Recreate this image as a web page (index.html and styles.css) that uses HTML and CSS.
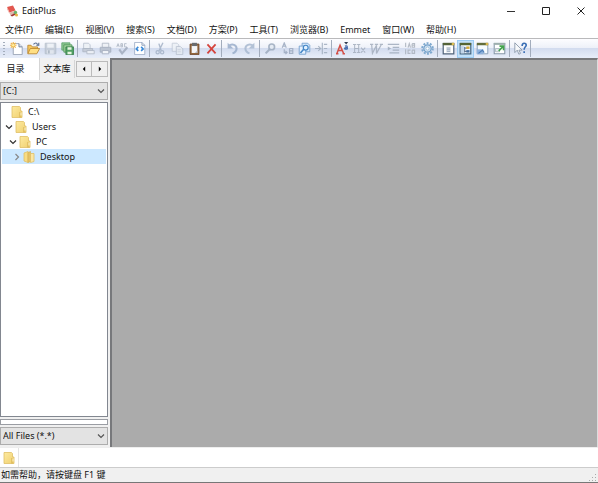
FILE: index.html
```html
<!DOCTYPE html>
<html lang="zh-CN">
<head>
<meta charset="utf-8">
<title>EditPlus</title>
<link rel="stylesheet" href="styles.css">
</head>
<body>
<svg class="defs" aria-hidden="true">
  <defs>
    <linearGradient id="gold" x1="0" y1="0" x2="1" y2="1"><stop offset="0" stop-color="#fdeaa0"/><stop offset="1" stop-color="#f0d070"/></linearGradient>
    <symbol id="folder" viewBox="0 0 12 12">
      <path d="M1 .5h7.500l1 1V5h1.500v6.500H1z" fill="url(#gold)" stroke="#e0bf66" stroke-width=".8"/>
      <path d="M9 6v5.500" stroke="#d3ad4d" stroke-width="1"/>
      <path d="M10 6.500v3" stroke="#fff6cf" stroke-width="1"/>
    </symbol>
    <symbol id="folder-open" viewBox="0 0 12 12">
      <path d="M1 2l4-1.500v11l-4-1.500z" fill="#f8dc83" stroke="#e0bf66" stroke-width=".8"/>
      <path d="M5 1.500L7.500 .5v10l-2.500 1z" fill="#e5c367" stroke="#d3ad4d" stroke-width=".6"/>
      <path d="M7.500 2.500h3.500v8l-3.500 1z" fill="#fbe7a4" stroke="#e0bf66" stroke-width=".8"/>
    </symbol>
    <symbol id="down" viewBox="0 0 10 10"><path d="M2 3.500l3 3 3-3" fill="none" stroke="currentColor" stroke-width="1.200"/></symbol>
    <symbol id="right" viewBox="0 0 10 10"><path d="M3.500 2l3 3-3 3" fill="none" stroke="currentColor" stroke-width="1.200"/></symbol>
  </defs>
</svg>
<div class="app">
  <header class="titlebar">
    <svg class="logo" viewBox="0 0 12 12" aria-hidden="true">
      <path d="M1 2l6-1.500 2.500 5-6 2z" fill="#e2574f"/><path d="M1 2l2.500 5.500V9L1 4z" fill="#f5aaa0"/>
      <path d="M3.500 7.500l6-2 1 2-6 3z" fill="#dfb9ad"/><path d="M4.500 10.500l5-3 .5 2-4 2z" fill="#a33835"/>
      <circle cx="9.500" cy="7.500" r="1.700" fill="#69b36c"/><circle cx="10.500" cy="10" r="1.500" fill="#e8b343"/>
    </svg>
    <h1>EditPlus</h1>
    <div class="window-buttons">
      <button type="button" aria-label="最小化"><svg viewBox="0 0 10 10"><path d="M1 5.500h8" stroke="#333"/></svg></button>
      <button type="button" aria-label="最大化"><svg viewBox="0 0 10 10"><path d="M1.500 1.500h7v7h-7z" fill="none" stroke="#222"/></svg></button>
      <button type="button" aria-label="关闭"><svg viewBox="0 0 10 10"><path d="M1.500 1.500l7 7m0-7l-7 7" stroke="#222"/></svg></button>
    </div>
  </header>
  <nav class="menubar">
    <button type="button">文件(F)</button>
    <button type="button">编辑(E)</button>
    <button type="button">视图(V)</button>
    <button type="button">搜索(S)</button>
    <button type="button">文档(D)</button>
    <button type="button">方案(P)</button>
    <button type="button">工具(T)</button>
    <button type="button">浏览器(B)</button>
    <button type="button">Emmet</button>
    <button type="button">窗口(W)</button>
    <button type="button">帮助(H)</button>
  </nav>
  <div class="toolbar" role="toolbar">
    <span class="grip"></span>
    <button type="button" aria-label="新建"><svg viewBox="0 0 16 16"><path d="M4 2h7l4 4v9.500H4z" fill="#fff" stroke="#8c98ab"/><path d="M11 2v4h4" fill="#dfe6f0" stroke="#5f6f8a"/><path d="M4 0v8M0 4h8M1 1l6 6M7 1L1 7" stroke="#f2b443" stroke-width="1.400"/><circle cx="4" cy="4" r="1.500" fill="#fff0a0"/></svg></button>
    <button type="button" aria-label="打开"><svg viewBox="0 0 16 16"><path d="M1 14V4h4l1.500 2H13v3" fill="#f5c760" stroke="#b9822a"/><path d="M1 14.500l3-6.500h11.500L12 14.500z" fill="#ffdf83" stroke="#b9822a"/><path d="M8 3c2-2.500 4-2 5 0m1.500-2v3h-3" fill="none" stroke="#53688c" stroke-width="1.300"/></svg></button>
    <button type="button" aria-label="保存" disabled><svg viewBox="0 0 16 16"><path d="M1.500 1.500h13v13h-13z" fill="#c3cbd6" stroke="#adb7c4"/><path d="M4 2h8v5H4z" fill="#edf1f6"/><path d="M4 10h8v4.500H4z" fill="#e1e6ed"/><path d="M6 10v4" stroke="#a4afbc" stroke-width="2"/></svg></button>
    <button type="button" aria-label="全部保存"><svg viewBox="0 0 16 16"><path d="M1 1h10v9H1z" fill="#8cc68f" stroke="#5ba36b"/><path d="M3.500 3.500h10v9h-10z" fill="#a6d79f" stroke="#4b9359"/><path d="M6 6h9.500v9.500H6z" fill="#4fa063" stroke="#347a49"/><path d="M8 6.500h5v3H8zM8 12h5v3H8z" fill="#e6f5df"/></svg></button>
    <span class="sep"></span>
    <button type="button" aria-label="打印预览" disabled><svg viewBox="0 0 16 16"><path d="M2 1.500h6l2 2V8H2z" fill="#edf1f6" stroke="#adb6c5"/><path d="M1 8h12v4H1z" fill="#c3c9d4" stroke="#a6afbd"/><path d="M6 10.500h9v4H6z" fill="#eef1f6" stroke="#a6afbd"/></svg></button>
    <button type="button" aria-label="打印" disabled><svg viewBox="0 0 16 16"><path d="M4 1.500h8V7H4z" fill="#eef1f6" stroke="#a2abb9"/><path d="M1.500 6.500h13v6h-13z" fill="#b8c0cd" stroke="#9aa4b5"/><path d="M4 10.500h8v4H4z" fill="#f6f8fb" stroke="#9aa4b5"/></svg></button>
    <button type="button" aria-label="拼写检查" disabled><svg viewBox="0 0 16 16"><path d="M1 6l1.500-4L4 6M1.500 4.500h2M6 6V2h2v4H6m0-2h2m5-2h-2.500v4H13" fill="none" stroke="#a2acbb"/><path d="M4 9l3.500 5L14 6.500" fill="none" stroke="#a2acbe" stroke-width="2.600"/></svg></button>
    <button type="button" aria-label="查看源代码"><svg viewBox="0 0 16 16"><path d="M2 .5h9L14.500 4v11.500H2z" fill="#fff" stroke="#99a9c4"/><path d="M11 .5V4h3.500" fill="none" stroke="#8092af"/><path d="M6.500 6L4 8.500 6.500 11M10 6l2.500 2.500L10 11" fill="none" stroke="#3888d8" stroke-width="2"/></svg></button>
    <span class="sep"></span>
    <button type="button" aria-label="剪切" disabled><svg viewBox="0 0 16 16"><path d="M11 1L6 11M6 2l3 9" stroke="#a4b2c7" stroke-width="1.700"/><circle cx="4.500" cy="12.500" r="2" fill="none" stroke="#a4b2c7" stroke-width="1.500"/><circle cx="10" cy="12.500" r="2" fill="none" stroke="#a4b2c7" stroke-width="1.500"/></svg></button>
    <button type="button" aria-label="复制" disabled><svg viewBox="0 0 16 16"><path d="M1.500 1.500h6l2 2v8h-8z" fill="#edf1f7" stroke="#bbc4d2"/><path d="M6.500 5.500h5l3 3v7h-8z" fill="#e5eaf1" stroke="#b0bac9"/><path d="M8 9.500h4M8 12h4" stroke="#c6cdd8"/></svg></button>
    <button type="button" aria-label="粘贴"><svg viewBox="0 0 16 16"><path d="M2.500 2.500h11v13h-11z" fill="#93673c" stroke="#6e482d"/><path d="M4.500 4.500h7v9h-7z" fill="#f4f6f9"/><path d="M5 1h6v4H5z" fill="#696c70"/><path d="M8.500 13.500l3-3v3z" fill="#b5bdc9"/></svg></button>
    <button type="button" aria-label="删除"><svg viewBox="0 0 16 16"><path d="M3 3l10 11M13 3L3 14" stroke="#d5443d" stroke-width="2.200"/></svg></button>
    <span class="sep"></span>
    <button type="button" aria-label="撤销" disabled><svg viewBox="0 0 16 16"><path d="M3 5c5-4 10-1 10 3 0 3-2 5-5 6" fill="none" stroke="#9aaecb" stroke-width="2.500"/><path d="M2 1v7h7z" fill="#9aaecb"/></svg></button>
    <button type="button" aria-label="重做" disabled><svg viewBox="0 0 16 16"><path d="M13 5C8 1 3 4 3 8c0 3 2 5 5 6" fill="none" stroke="#a8b9d0" stroke-width="2.500"/><path d="M14 1v7H7z" fill="#a8b9d0"/></svg></button>
    <span class="sep"></span>
    <button type="button" aria-label="查找" disabled><svg viewBox="0 0 16 16"><circle cx="9.500" cy="6" r="3.500" fill="#e4eaf2" stroke="#9caabd" stroke-width="2"/><path d="M7 9l-5 5" stroke="#9caabd" stroke-width="2.500"/></svg></button>
    <button type="button" aria-label="替换" disabled><svg viewBox="0 0 16 16"><path d="M1.500 7L4 1l2.500 6M2.500 5h3M4 9v4h3m-1.500-2l2 2-2 2M10.500 8v6h4V8h-4m0 3h4" fill="none" stroke="#9ba9bf" stroke-width="1.400"/></svg></button>
    <button type="button" aria-label="在文件中查找"><svg viewBox="0 0 16 16"><path d="M5 1.500h7l2.500 2.500v8H5z" fill="#d5e8fb" stroke="#6f9ccc"/><path d="M1.500 5h8v10h-8z" fill="#e4f0fd" stroke="#6997ca"/><circle cx="9.500" cy="7" r="3" fill="#e1f1ff" stroke="#4486c7" stroke-width="1.500"/><path d="M7 9l-4 4.500" stroke="#4486c7" stroke-width="2"/></svg></button>
    <button type="button" aria-label="转到行" disabled><svg viewBox="0 0 16 16"><path d="M0 8h6M4 5l3 3-3 3M9 1v14M11 3h4M11 8h4M11 13h4" fill="none" stroke="#a0adbe" stroke-width="1.400"/></svg></button>
    <span class="sep"></span>
    <button type="button" aria-label="字体"><svg viewBox="0 0 16 16"><path d="M1 14.500L5 4l4.500 10.500M3 10.500h5M0 14.500h3M8 14.500h3" fill="none" stroke="#d35048" stroke-width="1.900"/><path d="M11 5c3-1 3 0 3 4M14 7c-5-.5-4 3 0 1.500" fill="none" stroke="#4068ad" stroke-width="1.500"/><path d="M10 0h5l-2.500 3z" fill="#333d52"/></svg></button>
    <button type="button" aria-label="十六进制" disabled><svg viewBox="0 0 16 16"><path d="M2 3v10M7 3v10M2 8h5M0 3h4M5 3h4M0 13h4M5 13h4M10 7l5 6M15 7l-5 6" fill="none" stroke="#a4aebd" stroke-width="1.300"/></svg></button>
    <button type="button" aria-label="自动换行" disabled><svg viewBox="0 0 16 16"><path d="M2 3l1 11L8 4v10l6-11M0 3h4M6 3h4M12 3h4" fill="none" stroke="#a4aebd" stroke-width="1.500"/></svg></button>
    <button type="button" aria-label="缩进" disabled><svg viewBox="0 0 16 16"><path d="M1 3h14M7 6.500h8M7 10h8M3 13.500h12" stroke="#a0acbc" stroke-width="1.500"/><path d="M1 5.500v5l4-2.500z" fill="#a0acbc"/></svg></button>
    <button type="button" aria-label="行号" disabled><svg viewBox="0 0 16 16"><path d="M2 1v5M2 9v6M5 7l1.500-5L8 7M10 2v4.500h3V2h-3m0 2h3M8 10H5v4h3m2-4v4h3v-4h-3" fill="none" stroke="#abb2bd" stroke-width="1.400"/></svg></button>
    <button type="button" aria-label="首选项"><svg viewBox="0 0 16 16"><circle cx="8" cy="8" r="6.500" fill="none" stroke="#7fa9cf" stroke-width="2.500" stroke-dasharray="2.400 1.700"/><circle cx="8" cy="8" r="4.500" fill="#d3e4f3" stroke="#739fc9" stroke-width="1.500"/><circle cx="8" cy="8" r="2" fill="#fff" stroke="#94b5d4"/></svg></button>
    <span class="sep"></span>
    <button type="button" aria-label="全屏"><svg viewBox="0 0 16 16"><path d="M1.500 2h13v12.500h-13z" fill="#fff" stroke="#52647b" stroke-width="1.500"/><path d="M1 1h14v3H1z" fill="#546238"/><path d="M12 1h3v3h-3z" fill="#dfbd50"/><path d="M5 6h6v7H5z" fill="#e4e8ec"/><path d="M6 7.500h4M6 9.500h4M6 11.500h4" stroke="#8b9eb7"/></svg></button>
    <button type="button" class="pressed" aria-pressed="true" aria-label="目录窗口"><svg viewBox="0 0 16 16"><path d="M1.500 2h13v12.500h-13z" fill="#f6fbff" stroke="#45647f" stroke-width="1.500"/><path d="M1 1h14v3H1z" fill="#536433"/><path d="M7 6v7M7 7.500h3M7 11.500h3" stroke="#344f73"/><path d="M2 5h4v9H2z" fill="#c2d5e9"/><path d="M9 5.500h4v3H9z" fill="#d3a936"/><path d="M9 10h4v3H9z" fill="#466d9b"/></svg></button>
    <button type="button" aria-label="输出窗口"><svg viewBox="0 0 16 16"><path d="M1.500 2h13v12.500h-13z" fill="#f6fbff" stroke="#7890aa"/><path d="M1 1h14v3H1z" fill="#626d3d"/><path d="M12 1h3v3h-3z" fill="#d9b64b"/><path d="M1 9h8v6H1z" fill="#8eb1dc"/><path d="M3 14l5-4 2 3" fill="none" stroke="#4d7eb7" stroke-width="1.500"/></svg></button>
    <button type="button" aria-label="浏览器窗口"><svg viewBox="0 0 16 16"><path d="M1.500 2h13v12.500h-13z" fill="#fff" stroke="#8697a8" stroke-width="1.300"/><path d="M1 1h14v2.500H1z" fill="#9dafae"/><path d="M3 8h5v4H3z" fill="#e3e9ec" stroke="#a4b4bd"/><path d="M7 11l5-5M8 5h5v5" fill="none" stroke="#43a44d" stroke-width="2"/></svg></button>
    <span class="sep"></span>
    <button type="button" aria-label="帮助"><svg viewBox="0 0 16 16"><path d="M1 1v12l3-3 2 5 2-1-2-4h4z" fill="#f6f8fb" stroke="#8190a4"/><path d="M10 5c0-5 5-4 5-1 0 2-2.500 2-2.500 5.500" fill="none" stroke="#396eb5" stroke-width="2"/><path d="M11.500 11.500h2v2h-2z" fill="#396eb5"/></svg></button>
    <span class="sep"></span>
  </div>
  <main class="workspace">
    <aside class="sidebar">
      <div class="tabs">
        <button type="button" class="tab active">目录</button>
        <button type="button" class="tab">文本库</button>
        <div class="scroller">
          <button type="button" aria-label="向左"><svg viewBox="0 0 10 10"><path d="M6.500 2v6l-3-3z"/></svg></button>
          <button type="button" aria-label="向右"><svg viewBox="0 0 10 10"><path d="M3.500 2v6l3-3z"/></svg></button>
        </div>
      </div>
      <div class="combo">
        <select aria-label="驱动器"><option>[C:]</option></select>
        <svg><use href="#down"/></svg>
      </div>
      <ul class="tree">
        <li class="depth-0"><svg class="folder"><use href="#folder"/></svg><span>C:\</span></li>
        <li class="depth-1"><svg class="arrow"><use href="#down"/></svg><svg class="folder"><use href="#folder"/></svg><span>Users</span></li>
        <li class="depth-2"><svg class="arrow"><use href="#down"/></svg><svg class="folder"><use href="#folder"/></svg><span>PC</span></li>
        <li class="depth-3 selected"><svg class="arrow"><use href="#right"/></svg><svg class="folder"><use href="#folder-open"/></svg><span>Desktop</span></li>
      </ul>
      <div class="file-list"></div>
      <div class="combo">
        <select aria-label="文件类型"><option>All Files (*.*)</option></select>
        <svg><use href="#down"/></svg>
      </div>
    </aside>
    <section class="canvas"></section>
  </main>
  <div class="doc-tabs"><button type="button" aria-label="目录"><svg class="folder"><use href="#folder"/></svg></button></div>
  <footer class="statusbar">
    <span>如需帮助，请按键盘 F1 键</span>
    <svg class="resize" viewBox="0 0 8 8" aria-hidden="true"><path d="M6 0h1v1H6zM3 3h1v1H3zM6 3h1v1H6zM0 6h1v1H0zM3 6h1v1H3zM6 6h1v1H6z" fill="#aaa"/></svg>
  </footer>
</div>
</body>
</html>
```
FILE: styles.css
```css
* {
  box-sizing: border-box;
}

body {
  margin: 0;
  color: #111;
  font: 9px/12px "Noto Sans", "Noto Sans CJK SC", sans-serif;
}

button,
select {
  margin: 0;
  padding: 0;
  border: 0;
  background: none;
  color: inherit;
  font: inherit;
}

.defs {
  position: absolute;
  width: 0;
  height: 0;
}

.app {
  display: flex;
  flex-direction: column;
  height: 100vh;
  background: #fff;
}

.titlebar {
  display: flex;
  align-items: center;
  gap: 4px;
  height: 22px;
  padding-left: 6px;
}

.titlebar h1 {
  margin: 0;
  font-size: 9px;
  font-weight: 400;
}

.logo,
.folder {
  width: 12px;
  height: 12px;
}

.window-buttons {
  display: flex;
  margin-left: auto;
}

.window-buttons button {
  display: grid;
  place-items: center;
  width: 35px;
  height: 22px;
}

.window-buttons svg {
  width: 10px;
  height: 10px;
}

.menubar {
  display: flex;
  align-items: center;
  gap: 12px;
  height: 16px;
  padding-left: 5px;
}

.menubar button {
  white-space: nowrap;
}

.toolbar {
  display: flex;
  align-items: center;
  height: 20px;
  border-top: 1px solid #b9b9bb;
  background: linear-gradient(#fdfdff, #eef1f9 45%, #d3dcef 50%, #e6ecf8 95%);
}

.toolbar button {
  display: grid;
  flex: none;
  place-items: center;
  width: 17px;
  height: 18px;
}

.toolbar svg {
  width: 13px;
  height: 13px;
}

.toolbar button:disabled svg {
  opacity: 0.85;
}

.toolbar .pressed {
  border: 1px solid #9ccbf2;
  background: #c2e0f8;
}

.grip {
  width: 2px;
  height: 13px;
  margin: 0 3px;
  background: repeating-linear-gradient(#a4adbc 0 1px, transparent 1px 3px);
}

.sep {
  width: 4px;
  height: 17px;
  background: linear-gradient(#a3adbd, #a3adbd) 1px 0 / 1px 100% no-repeat;
}

.workspace {
  display: flex;
  flex: 1;
  min-height: 0;
}

.sidebar {
  display: flex;
  flex-direction: column;
  gap: 2px;
  width: 110px;
  padding: 0 2px 2px 0;
  background: #f0f0f0;
}

.canvas {
  flex: 1;
  border-top: 2px solid #77787b;
  border-left: 2px solid #77787b;
  border-right: 1px solid #ddd;
  background: #ababab;
}

.tabs {
  display: flex;
  align-items: center;
  height: 22px;
}

.tab {
  width: 35px;
  height: 18px;
  border-right: 1px solid #d5d5d5;
}

.tab.active {
  width: 40px;
  height: 22px;
  padding-right: 8px;
  background: #fff;
}

.scroller {
  display: flex;
  margin-left: auto;
}

.scroller button {
  display: grid;
  place-items: center;
  width: 16px;
  height: 16px;
  border: 1px solid #bbb;
}

.scroller button + button {
  border-left: 0;
}

.scroller svg {
  width: 8px;
  height: 8px;
}

.combo {
  display: grid;
  align-items: center;
  height: 18px;
  border: 1px solid #adadad;
  background: #e3e3e3;
}

.combo select,
.combo svg {
  grid-area: 1 / 1;
}

.combo select {
  appearance: none;
  width: 100%;
  height: 16px;
  padding-left: 2px;
}

.combo svg {
  justify-self: end;
  width: 10px;
  height: 10px;
  margin-right: 1px;
  color: #555;
  pointer-events: none;
}

.tree {
  flex: 1;
  min-height: 0;
  margin: 0;
  padding: 1px;
  border: 1px solid #828790;
  background: #fff;
  list-style: none;
}

.tree li {
  display: flex;
  align-items: center;
  height: 15px;
}

.tree .arrow {
  width: 10px;
  height: 10px;
  margin-right: 1px;
  color: #333;
}

.tree .folder {
  margin-right: 5px;
}

.tree .depth-0 {
  padding-left: 9px;
}

.tree .depth-1 {
  padding-left: 2px;
}

.tree .depth-2 {
  padding-left: 6px;
}

.tree .depth-3 {
  padding-left: 10px;
}

.tree .selected {
  background: #cce8ff;
}

.tree .selected .arrow {
  color: #888;
}

.file-list {
  height: 6px;
  border: 1px solid #9a9da3;
  background: #fff;
}

.doc-tabs {
  display: flex;
  height: 20px;
  border-top: 1px solid #eee;
}

.doc-tabs button {
  display: grid;
  place-items: center;
  width: 19px;
  border-right: 1px solid #e4e4e4;
}

.statusbar {
  display: flex;
  align-items: center;
  justify-content: space-between;
  height: 16px;
  padding: 0 1px;
  border-top: 1px solid #ccc;
  border-bottom: 1px solid #777;
  background: #f0f0f0;
}

.resize {
  align-self: flex-end;
  width: 8px;
  height: 8px;
}
```
